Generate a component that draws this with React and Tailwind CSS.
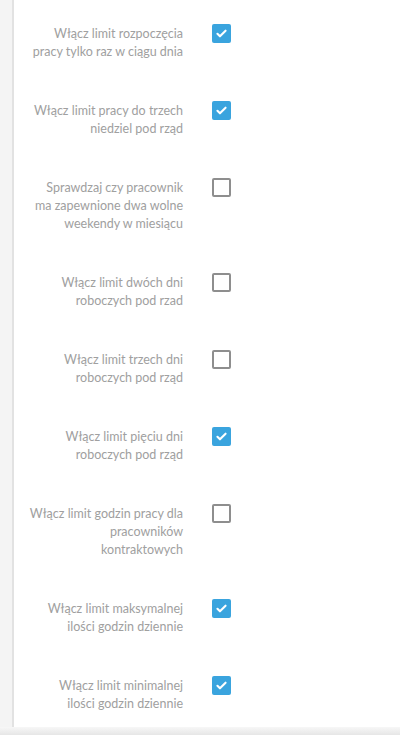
import React from "react";

const settings = [
  { lines: ["Włącz limit rozpoczęcia", "pracy tylko raz w ciągu dnia"], checked: true },
  { lines: ["Włącz limit pracy do trzech", "niedziel pod rząd"], checked: true },
  { lines: ["Sprawdzaj czy pracownik", "ma zapewnione dwa wolne", "weekendy w miesiącu"], checked: false },
  { lines: ["Włącz limit dwóch dni", "roboczych pod rzad"], checked: false },
  { lines: ["Włącz limit trzech dni", "roboczych pod rząd"], checked: false },
  { lines: ["Włącz limit pięciu dni", "roboczych pod rząd"], checked: true },
  { lines: ["Włącz limit godzin pracy dla", "pracowników", "kontraktowych"], checked: false },
  { lines: ["Włącz limit maksymalnej", "ilości godzin dziennie"], checked: true },
  { lines: ["Włącz limit minimalnej", "ilości godzin dziennie"], checked: true },
];

function Checkbox({ checked }) {
  if (checked) {
    return (
      <span className="flex h-[19px] w-[19px] items-center justify-center rounded-[2px] bg-[#3aa4de]">
        <svg viewBox="0 0 16 16" className="h-[13px] w-[13px]" fill="none">
          <path d="M3 8.4l3.1 3L13 4.6" stroke="white" strokeWidth="2.6" strokeLinecap="round" strokeLinejoin="round" />
        </svg>
      </span>
    );
  }
  return <span className="block h-[19px] w-[19px] rounded-[2px] border-2 border-[#8e8e8e] bg-white" />;
}

export default function App() {
  return (
    <div className="relative flex h-[735px] w-[400px] overflow-hidden bg-white font-['Lato','Open_Sans',sans-serif]">
      <div className="w-[14px] shrink-0 border-r-2 border-[#e2e2e2] bg-[#f4f4f4]" />
      <div className="flex flex-1 flex-col pt-[5px]">
        {settings.map((s) => (
          <div key={s.lines[0]} className="flex items-start pt-[20px] pb-[21px]">
            <div className="ml-[13px] flex w-[156px] flex-col items-end whitespace-nowrap text-[12.5px] leading-[18px] text-[#a0a0a0]">
              {s.lines.map((l) => (
                <span key={l}>{l}</span>
              ))}
            </div>
            <div className="-mt-[1px] ml-[29px]">
              <Checkbox checked={s.checked} />
            </div>
          </div>
        ))}
      </div>
      <div className="absolute inset-x-0 bottom-0 h-[8px] bg-gradient-to-b from-[#f7f7f7] to-[#e6e6e6]" />
    </div>
  );
}
